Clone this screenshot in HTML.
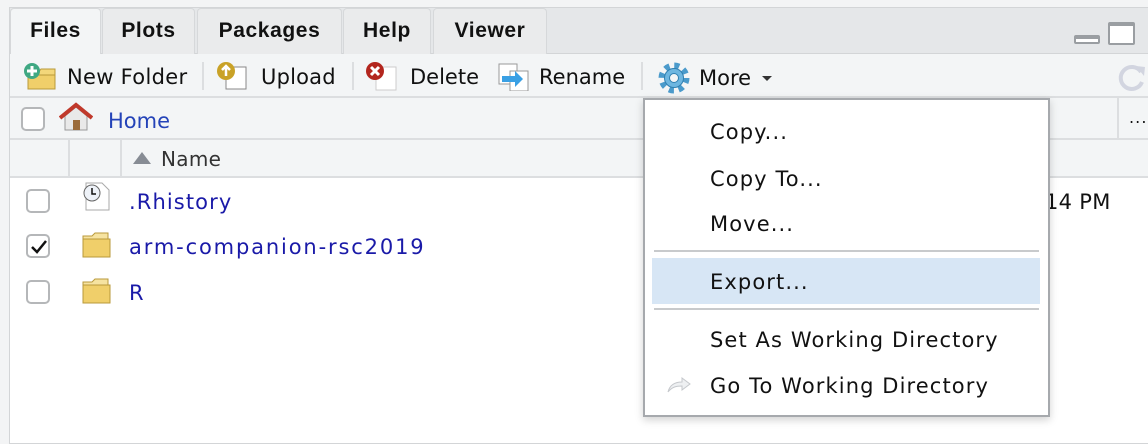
<!DOCTYPE html>
<html><head><meta charset="utf-8"><style>
*{margin:0;padding:0;box-sizing:border-box}
body{width:1148px;height:444px;background:#f3f4f5;font-family:"DejaVu Sans","Liberation Sans",sans-serif;position:relative;overflow:hidden;color:#111;letter-spacing:1.1px}
.a{position:absolute}
.tab{position:absolute;top:8px;height:46px;background:#eaebec;border:1px solid #d6d8da;border-bottom:none;border-radius:4px 4px 0 0;font-family:"Liberation Sans",sans-serif;font-weight:bold;font-size:21px;letter-spacing:.6px;line-height:44px;text-align:center;color:#111}
.tb{font-size:21px;color:#111}
.cb{position:absolute;width:24px;height:24px;border:2px solid #b5b7b9;border-radius:5px;background:#fff}
.lnk{color:#1a1aa8;font-size:21px}
.mi{position:absolute;left:710px;font-size:21px;color:#111}
.sep{position:absolute;width:2px;height:28px;background:#dcdee0;top:62px}
</style></head><body>
<div class="a" style="left:9px;top:7px;width:1139px;height:437px;background:#fff;border:1px solid #d3d5d7;border-right:none"></div>
<div class="a" style="left:10px;top:8px;width:1138px;height:46px;background:#e5e7e9;border-bottom:1px solid #d3d5d7"></div>
<div class="tab" style="left:10px;width:91px;background:#f3f5f6;height:47px">Files</div>
<div class="tab" style="left:102px;width:93px">Plots</div>
<div class="tab" style="left:197px;width:145px">Packages</div>
<div class="tab" style="left:343px;width:88px">Help</div>
<div class="tab" style="left:433px;width:114px">Viewer</div>
<div class="a" style="left:1074px;top:35px;width:26px;height:9px;border:2px solid #9a9ea2;border-top-width:4px;border-radius:2px;background:#fff"></div>
<div class="a" style="left:1108px;top:22px;width:27px;height:23px;border:2px solid #9a9ea2;border-top-width:4px;border-radius:2px;background:#fff"></div>
<div class="a" style="left:10px;top:54px;width:1138px;height:44px;background:#f3f5f6;border-bottom:2px solid #dcdee0"></div>
<svg class="a" style="left:22px;top:61px" width="38" height="30"><path d="M6 12h10l3 -4h14v20H6z" fill="#f3d77a" stroke="#b99a3b"/><rect x="6" y="14" width="27" height="14" fill="#f0cf6a" stroke="#b99a3b"/><circle cx="10" cy="10" r="8" fill="#3fa883"/><path d="M10 5v10M5 10h10" stroke="#fff" stroke-width="3"/></svg>
<div class="a tb" style="left:67px;top:65px;letter-spacing:.3px">New Folder</div>
<div class="sep" style="left:202px"></div>
<svg class="a" style="left:214px;top:61px" width="36" height="30"><rect x="12" y="6" width="20" height="22" fill="#fff" stroke="#888"/><circle cx="12" cy="10" r="9" fill="#c9a227"/><path d="M12 15V6M8 9l4-4 4 4" stroke="#fff" stroke-width="2.5" fill="none"/></svg>
<div class="a tb" style="left:261px;top:65px;letter-spacing:.2px">Upload</div>
<div class="sep" style="left:352px"></div>
<svg class="a" style="left:364px;top:61px" width="36" height="30"><rect x="12" y="6" width="20" height="23" fill="#fff" stroke="#ccc"/><circle cx="11" cy="10" r="9" fill="#b3261e"/><path d="M7 6l8 8M15 6l-8 8" stroke="#fff" stroke-width="3"/></svg>
<div class="a tb" style="left:410px;top:65px;letter-spacing:0">Delete</div>
<svg class="a" style="left:498px;top:63px" width="34" height="28"><rect x="1" y="1" width="18" height="20" fill="#fff" stroke="#999"/><rect x="12" y="8" width="18" height="20" fill="#fff" stroke="#999"/><path d="M4 13h13v-5l8 8-8 8v-5H4z" fill="#3aa0e4"/></svg>
<div class="a tb" style="left:539px;top:65px;letter-spacing:0">Rename</div>
<div class="sep" style="left:641px"></div>
<svg class="a" style="left:657px;top:61px" width="34" height="34" viewBox="0 0 34 34"><circle cx="17" cy="17" r="12.5" fill="none" stroke="#4a9acb" stroke-width="6" stroke-dasharray="5 4.8"/><circle cx="17" cy="17" r="9.5" fill="#6db6e0" stroke="#2f7fb0"/><circle cx="17" cy="17" r="4.5" fill="#f3f5f6" stroke="#2f7fb0"/></svg>
<div class="a tb" style="left:699px;top:66px;letter-spacing:0">More</div>
<svg class="a" style="left:761px;top:75px" width="12" height="8"><path d="M1 1h10L6 6z" fill="#333"/></svg>
<svg class="a" style="left:1115px;top:62px" width="33" height="32"><path d="M26 10A11 11 0 1 0 27 20" fill="none" stroke="#d2d5e0" stroke-width="4"/><path d="M21 4l9 1-1 9z" fill="#d2d5e0"/></svg>
<div class="a" style="left:10px;top:98px;width:1138px;height:42px;background:#f3f5f6;border-bottom:2px solid #dcdee0"></div>
<div class="cb" style="left:21px;top:107px"></div>
<svg class="a" style="left:59px;top:102px" width="34" height="30"><path d="M6 14v14h22V14L17 5z" fill="#e9e9e9" stroke="#999"/><path d="M1 16L17 3l16 13" fill="none" stroke="#c0392b" stroke-width="4"/><rect x="14" y="18" width="7" height="10" fill="#9b6b3a"/></svg>
<div class="a lnk" style="left:108px;top:109px;color:#2443b8;letter-spacing:0">Home</div>
<div class="a" style="left:1117px;top:98px;width:2px;height:42px;background:#dcdee0"></div>
<div class="a" style="left:1129px;top:108px;font-size:16px">...</div>
<div class="a" style="left:10px;top:140px;width:1138px;height:38px;background:#f3f5f6;border-bottom:2px solid #dcdee0"></div>
<div class="a" style="left:68px;top:140px;width:2px;height:38px;background:#dcdee0"></div>
<div class="a" style="left:120px;top:140px;width:2px;height:38px;background:#dcdee0"></div>
<svg class="a" style="left:132px;top:151px" width="22" height="14"><path d="M1 13L10 1l9 12z" fill="#878c94"/></svg>
<div class="a" style="left:161px;top:147px;font-size:20px;color:#333;letter-spacing:.3px">Name</div>
<div class="cb" style="left:26px;top:189px"></div>
<svg class="a" style="left:80px;top:181px" width="34" height="32"><path d="M6 2h16l7 7v20H6z" fill="#fff" stroke="#aaa"/><circle cx="12" cy="12" r="8" fill="#eef2f8" stroke="#666"/><path d="M12 7v6h4" stroke="#111" stroke-width="1.5" fill="none"/></svg>
<div class="a lnk" style="left:129px;top:190px">.Rhistory</div>
<div class="cb" style="left:26px;top:234px"></div>
<svg class="a" style="left:30px;top:239px" width="18" height="16"><path d="M2 8l5 5L16 2" fill="none" stroke="#111" stroke-width="2.5"/></svg>
<svg class="a" style="left:80px;top:230px" width="34" height="30"><path d="M3 6h9l3 -3h13v24H3z" fill="#f6e3a0" stroke="#b99a3b"/><rect x="3" y="9" width="27" height="18" fill="#f0cf6a" stroke="#b99a3b"/></svg>
<div class="a lnk" style="left:129px;top:235px;letter-spacing:1.85px">arm-companion-rsc2019</div>
<div class="cb" style="left:26px;top:280px"></div>
<svg class="a" style="left:80px;top:276px" width="34" height="30"><path d="M3 6h9l3 -3h13v24H3z" fill="#f6e3a0" stroke="#b99a3b"/><rect x="3" y="9" width="27" height="18" fill="#f0cf6a" stroke="#b99a3b"/></svg>
<div class="a lnk" style="left:129px;top:281px">R</div>
<div class="a" style="left:1045px;top:190px;font-size:21px;letter-spacing:.3px">14 PM</div>
<div class="a" style="left:643px;top:98px;width:407px;height:319px;background:#fff;border:2px solid #a6a9ad;box-shadow:0 3px 8px rgba(0,0,0,.18)"></div>
<div class="mi" style="top:120px">Copy...</div>
<div class="mi" style="top:167px">Copy To...</div>
<div class="mi" style="top:212px">Move...</div>
<div class="a" style="left:654px;top:250px;width:385px;height:2px;background:#c8cacc"></div>
<div class="a" style="left:652px;top:258px;width:388px;height:46px;background:#d7e6f5"></div>
<div class="mi" style="top:270px">Export...</div>
<div class="a" style="left:654px;top:308px;width:385px;height:2px;background:#c8cacc"></div>
<div class="mi" style="top:328px">Set As Working Directory</div>
<svg class="a" style="left:666px;top:375px" width="26" height="20"><path d="M2 17C4 9 10 7 16 7V3l8 6-8 6v-4C10 11 6 12 2 17z" fill="#eef0f2" stroke="#c5c8cc"/></svg>
<div class="mi" style="top:374px">Go To Working Directory</div>
</body></html>
